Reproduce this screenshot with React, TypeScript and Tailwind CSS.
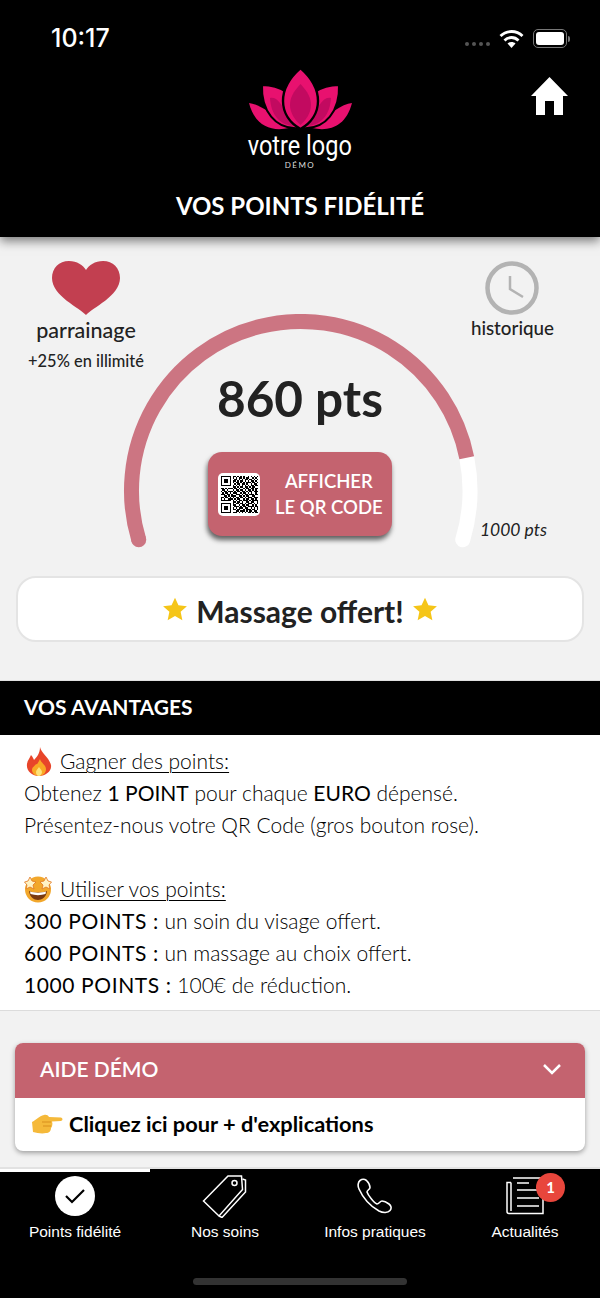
import React from "react"

const font = { fontFamily: "Lato, 'Open Sans', sans-serif" }

const qrRows = [
  "1111111011010101001010101",
  "1000001010101101011001010",
  "1011101001101010110110101",
  "1011101011010110101011010",
  "1011101010110101011101101",
  "1000001001011011010010110",
  "1111111010101010101011011",
  "0000000011010110110101100",
  "1101011101101001011011011",
  "0110100010110110101101010",
  "1011011101011011010110111",
  "0101101011100101101010010",
  "1110110100111010110111011",
  "0011010111001101011001100",
  "1101101010110110101110111",
  "1010011101011001011011010",
  "1111111010101101110101111",
  "0000000011011010011011001",
  "1111111010110110101110101",
  "1000001011001011011001010",
  "1011101001110101101111011",
  "1011101010101110110010101",
  "1011101011011001011101101",
  "1000001000110111010110110",
  "1111111011101010101101011",
]

const QrCode = () => (
  <div className="flex h-[43px] w-[42px] shrink-0 items-center justify-center rounded-[5px] bg-white">
    <svg width="37" height="37" viewBox="0 0 25 25" shapeRendering="crispEdges">
      {qrRows.map((row, y) =>
        row.split("").map((c, x) => (c === "1" ? <rect key={x + "-" + y} x={x} y={y} width="1" height="1" fill="#000" /> : null))
      )}
    </svg>
  </div>
)

const Lotus = () => (
  <svg width="103" height="63" viewBox="0 0 103 63">
    <path d="M0 35 C10 36 24 46 40 60 C22 64 6 58 0 35 Z" fill="#e8116f" />
    <path d="M103 35 C93 36 79 46 63 60 C81 64 97 58 103 35 Z" fill="#e8116f" />
    <path d="M13 17 C22 17 30 19 37 24 C32 36 37 50 50 60 C26 62 12 42 13 17 Z" fill="#e8116f" stroke="#000" strokeWidth="2" />
    <path d="M90 17 C81 17 73 19 66 24 C71 36 66 50 53 60 C77 62 91 42 90 17 Z" fill="#e8116f" stroke="#000" strokeWidth="2" />
    <path d="M21 30 C30 28 33 40 47 58 C30 58 22 46 21 30 Z" fill="#c20a60" />
    <path d="M82 30 C73 28 70 40 56 58 C73 58 81 46 82 30 Z" fill="#c20a60" />
    <path d="M51.5 0 C63 10 69 22 69 33 C69 45 62 55 51.5 61 C41 55 34 45 34 33 C34 22 40 10 51.5 0 Z" fill="#e8116f" stroke="#000" strokeWidth="2.4" />
    <path d="M51.5 16 C59 24 62 30 62 37 C62 45 57 52 51.5 57 C46 52 41 45 41 37 C41 30 44 24 51.5 16 Z" fill="#c20a60" />
  </svg>
)

const Star = () => (
  <svg width="26" height="26" viewBox="0 0 24 24">
    <path d="M12 1.5 L15.2 8.6 L23 9.4 L17.2 14.6 L18.8 22.3 L12 18.4 L5.2 22.3 L6.8 14.6 L1 9.4 L8.8 8.6 Z" fill="#f5c518" />
  </svg>
)

const Fire = () => (
  <svg width="26" height="29" viewBox="0 0 26 29">
    <path d="M14 0 C15 6 23 10 25 18 C26 24 20 29 13 29 C6 29 0 24 1 17 C1.500 13 4 11 5 8 C7 10 7.500 12 8 13 C11 10 14 6 14 0 Z" fill="#e8452a" />
    <path d="M14 12 C15 16 20 18 20 22 C20 26 17 29 13 29 C9 29 6 26 6 23 C6 20 9 19 10 17 C11 18 12 16 14 12 Z" fill="#f9a825" />
    <path d="M13 20 C14 22 16 23 16 25 C16 27 14 29 13 29 C11 29 10 27 10 25 C10 23 12 22 13 20 Z" fill="#fde27a" />
  </svg>
)

const StarFace = () => (
  <svg width="28" height="28" viewBox="0 0 28 28">
    <circle cx="14" cy="14.500" r="13" fill="#f2a72b" />
    <path d="M6 2 L8 6 L12 7 L9 10 L10 14 L6 12 L2 14 L3 10 L0.500 7 L4 6 Z" fill="#fff2c4" stroke="#e0761f" strokeWidth="0.8" />
    <path d="M22 2 L24 6 L27.500 7 L25 10 L26 14 L22 12 L18 14 L19 10 L16 7 L20 6 Z" fill="#fff2c4" stroke="#e0761f" strokeWidth="0.8" />
    <path d="M5 16 C10 18 18 18 23 16 C22.500 22 18 25 14 25 C10 25 5.500 22 5 16 Z" fill="#7a3a10" />
    <path d="M6 16.500 C10 18 18 18 22 16.500 L21.500 19 C17 20.500 11 20.500 6.500 19 Z" fill="#fff" />
  </svg>
)

const PointHand = () => (
  <svg width="32" height="24" viewBox="0 0 32 24">
    <path d="M1 10 C5 8 8 4 13 3 C15 2.500 17 3 18 5 L30 5.500 C32 6 32 8.500 30 9 L21 9.500 C22 12 21 15 20 16 C20 19 18 21 15 21 C11 22 6 21 2 20 Z" fill="#f5b93a" />
    <path d="M11 10 L20 10 M12 14 L20 14" stroke="#d98f1c" strokeWidth="1" fill="none" />
  </svg>
)

const TabIcon = ({ name }: { name: string }) => {
  if (name === "check") {
    return (
      <div className="flex h-10 w-10 items-center justify-center rounded-full bg-white">
        <svg width="22" height="18" viewBox="0 0 22 18" fill="none" stroke="#000" strokeWidth="2.200">
          <path d="M2 9 L8 15 L20 3" />
        </svg>
      </div>
    )
  }
  if (name === "tag") {
    return (
      <svg width="46" height="44" viewBox="0 0 46 44" fill="none" stroke="#fff" strokeWidth="1.500">
        <path d="M1.500 27 L26 2 L39.500 2 L40.500 15.500 L17 42 Z" />
        <path d="M40.500 5 L43.500 6 L43.500 18 L20 43.500 L17 42" />
        <circle cx="32.500" cy="9" r="2.500" />
      </svg>
    )
  }
  if (name === "phone") {
    return (
      <svg width="36" height="36" viewBox="0 0 36 36" fill="none" stroke="#fff" strokeWidth="1.600">
        <path d="M3 2.500 C1 4 0.500 8 2 11 C6 20 13 28 22 33 C26 35 31 35 33 32.500 C35 30 34 27.500 32 26 C30 24.500 27 23 25 23 C23 23 22 26 20 26 C17 25 11 17 10 14 C10 12 13 11.500 13 9.500 C13 7.500 11 4 9.500 2.500 C7.500 1 5 1 3 2.500 Z" />
      </svg>
    )
  }
  return (
    <svg width="38" height="38" viewBox="0 0 38 38" fill="none" stroke="#fff" strokeWidth="1.500">
      <path d="M7 1 L37 1 L37 36.500 L3 36.500 C1.500 36.500 1 35.500 1 34.500 L1 5.500 L5 5.500" />
      <path d="M5 5.500 L5 34" />
      <path d="M11 6 L23 6 M11 13 L33 13 M11 21 L33 21 M11 29 L33 29" />
    </svg>
  )
}

const Tab = ({ icon, label, badge }: { icon: string; label: string; badge?: boolean }) => (
  <div className="flex w-[150px] flex-col items-center">
    <div className="relative flex h-[46px] items-center justify-center">
      <TabIcon name={icon} />
      {badge && (
        <div className="absolute right-[-21px] top-0 flex h-[29px] w-[29px] items-center justify-center rounded-full bg-[#e8463c] text-[15px] font-bold text-white">
          1
        </div>
      )}
    </div>
    <p className="mt-[4px] text-[15.5px] leading-[18px] text-white" style={{ fontFamily: "'Liberation Sans', Arial, sans-serif" }}>
      {label}
    </p>
  </div>
)

export default function App() {
  return (
    <div className="relative flex h-[1298px] w-[600px] flex-col overflow-hidden bg-[#f2f2f2] text-[#222]" style={font}>
      {/* header */}
      <div className="relative z-10 h-[237px] bg-black shadow-[0_4px_10px_rgba(0,0,0,0.5)]">
        <div className="flex h-[68px] items-start justify-between pl-[51px] pr-[30px] pt-[22px]">
          <span className="text-[25px] font-medium leading-[32px] text-white" style={{ fontFamily: "Inter, sans-serif" }}>10:17</span>
          <div className="flex items-center gap-[9px] pt-[7px]">
            <div className="mt-[11px] flex gap-[3px]">
              <span className="h-[4px] w-[4px] rounded-full bg-[#555]" />
              <span className="h-[4px] w-[4px] rounded-full bg-[#555]" />
              <span className="h-[4px] w-[4px] rounded-full bg-[#555]" />
              <span className="h-[4px] w-[4px] rounded-full bg-[#555]" />
            </div>
            <svg width="25" height="19" viewBox="0 0 25 19">
              <path d="M12.500 19 L8.500 14.500 C10.500 12.500 14.500 12.500 16.500 14.500 Z" fill="#fff" />
              <path d="M5.500 11.500 C9.500 7.500 15.500 7.500 19.500 11.500" fill="none" stroke="#fff" strokeWidth="2.800" />
              <path d="M1.500 7 C7.500 1 17.500 1 23.500 7" fill="none" stroke="#fff" strokeWidth="2.800" />
            </svg>
            <div className="flex items-center gap-[1px]">
              <div className="h-[19px] w-[34px] rounded-[5px] border border-[#777] p-[2px]">
                <div className="h-full w-full rounded-[3px] bg-white" />
              </div>
              <div className="h-[6px] w-[2px] rounded-r-sm bg-[#777]" />
            </div>
          </div>
        </div>
        <div className="relative flex flex-col items-center">
          <Lotus />
          <p className="scale-x-[0.87] text-[27px] leading-[30px] text-white" style={{ fontFamily: "Roboto, sans-serif" }}>votre logo</p>
          <p className="mt-[-1px] text-[8px] leading-[10px] tracking-[1.5px] text-[#ddd]">DÉMO</p>
          <svg className="absolute right-[32px] top-[9px]" width="37" height="38" viewBox="0 0 37 38" fill="#fff">
            <path d="M18.500 0 L37 19 L32 19 L32 38 L23 38 L23 24 L14 24 L14 38 L5 38 L5 19 L0 19 Z" />
          </svg>
          <p className="mt-[21px] text-[24px] font-bold leading-[30px] text-white">VOS POINTS FIDÉLITÉ</p>
        </div>
      </div>

      {/* points */}
      <div className="h-[443px] px-4">
        <div className="flex h-[130px] items-start justify-between">
          <div className="ml-[12px] flex w-[116px] flex-col items-center pt-[24px]">
            <svg width="68" height="54" viewBox="0 0 68 54">
              <path d="M34 54 C28 47 0 35 0 17 C0 7 7 0 17 0 C25 0 31 4 34 9 C37 4 43 0 51 0 C61 0 68 7 68 17 C68 35 40 47 34 54 Z" fill="#c23f50" />
            </svg>
            <p className="mt-[2px] text-[21.5px] font-medium leading-[26px]">parrainage</p>
            <p className="mt-[8px] whitespace-nowrap text-[16.4px] font-medium leading-[20px]">+25% en illimité</p>
          </div>
          <div className="mr-[30px] flex flex-col items-center pt-[24px]">
            <svg width="54" height="54" viewBox="0 0 54 54" fill="none" stroke="#b3b3b3">
              <circle cx="27" cy="27" r="24.500" strokeWidth="4.500" />
              <path d="M25 15 L25 28 L38 36" strokeWidth="2.500" />
            </svg>
            <p className="mt-[1px] text-[18.8px] font-medium leading-[24px]">historique</p>
          </div>
        </div>
        <div className="relative mx-auto mt-[-53px] h-[240px] w-[368px]">
          <svg className="absolute inset-0" width="368" height="240" viewBox="0 0 368 240" fill="none" strokeWidth="15" strokeLinecap="round">
            <path d="M346.750 225.750 A169.250 169.250 0 0 0 350.750 143.750" stroke="#ffffff" />
            <path d="M22.750 225.750 A169.250 169.250 0 1 1 350.750 143.750" stroke="#cc7582" strokeLinecap="butt" />
            <circle cx="22.750" cy="225.750" r="7.500" fill="#cc7582" stroke="none" />
          </svg>
          <div className="relative flex flex-col items-center pt-[54px]">
            <p className="text-[49.5px] font-bold leading-[60px] text-[#222]">860 pts</p>
            <div className="mt-[24px] flex h-[84px] w-[184px] items-center gap-[15px] rounded-[14px] bg-[#c4636f] pl-[10px] shadow-[-1px_4px_5px_rgba(0,0,0,0.6)]">
              <QrCode />
              <p className="text-center text-[18.5px] font-semibold leading-[26px] text-white">AFFICHER<br />LE QR CODE</p>
            </div>
          </div>
          <p className="absolute right-[-63px] top-[206px] whitespace-nowrap text-[17.5px] italic leading-[20px] text-[#222]">1000 pts</p>
        </div>
        <div className="mt-[22px] flex h-[66px] items-center justify-center gap-[8px] rounded-[20px] border-2 border-[#e4e4e4] bg-white">
          <Star />
          <p className="pt-[3px] text-[30px] font-bold leading-[40px]">Massage offert!</p>
          <Star />
        </div>
      </div>

      {/* avantages */}
      <div className="flex h-[55px] items-center border-t border-[#e0e0e0] bg-black pb-[3px] pl-6">
        <p className="text-[21px] font-bold leading-[28px] text-white">VOS AVANTAGES</p>
      </div>
      <div className="h-[276px] border-b border-[#dcdcdc] bg-white pl-[24px] pt-[10px] text-[21px] font-light leading-[32px] text-black">
        <p className="ml-[2px] flex items-center gap-[8px]"><Fire /><span className="underline decoration-1 underline-offset-[3px]">Gagner des points:</span></p>
        <p>Obtenez <b>1 POINT</b> pour chaque <b>EURO</b> dépensé.</p>
        <p>Présentez-nous votre QR Code (gros bouton rose).</p>
        <p className="h-[32px]" />
        <p className="flex items-center gap-[8px]"><StarFace /><span className="underline decoration-1 underline-offset-[3px]">Utiliser vos points:</span></p>
        <p><b className="tracking-[0.6px]">300 POINTS :</b> un soin du visage offert.</p>
        <p><b className="tracking-[0.6px]">600 POINTS :</b> un massage au choix offert.</p>
        <p><b className="tracking-[0.6px]">1000 POINTS :</b> 100€ de réduction.</p>
      </div>

      {/* aide */}
      <div className="h-[158px] px-[15px] pt-[32px]">
        <div className="overflow-hidden rounded-[8px] bg-white shadow-[0_2px_5px_rgba(0,0,0,0.35)]">
          <div className="flex h-[55px] items-center justify-between bg-[#c4636f] pb-[4px] pl-[25px] pr-[23px]">
            <p className="text-[21px] font-semibold leading-[28px] text-white">AIDE DÉMO</p>
            <svg width="20" height="12" viewBox="0 0 20 12" fill="none" stroke="#fff" strokeWidth="2.500">
              <path d="M2 2 L10 10 L18 2" />
            </svg>
          </div>
          <div className="flex h-[53px] items-center gap-[6px] pb-[2px] pl-[16px]">
            <PointHand />
            <p className="text-[21.8px] font-bold leading-[30px] text-black">Cliquez ici pour + d'explications</p>
          </div>
        </div>
      </div>

      {/* tab bar */}
      <div className="relative h-[129px] bg-black">
        <div className="absolute left-0 top-[-2px] h-[2px] w-full bg-[#e2e2e2]" />
        <div className="absolute left-0 top-0 h-[3px] w-[150px] bg-white" />
        <div className="flex pt-[4px]">
          <Tab icon="check" label="Points fidélité" />
          <Tab icon="tag" label="Nos soins" />
          <Tab icon="phone" label="Infos pratiques" />
          <Tab icon="news" label="Actualités" badge />
        </div>
        <div className="mx-auto mt-[37px] h-[7px] w-[214px] rounded-full bg-[#333]" />
      </div>
    </div>
  )
}
